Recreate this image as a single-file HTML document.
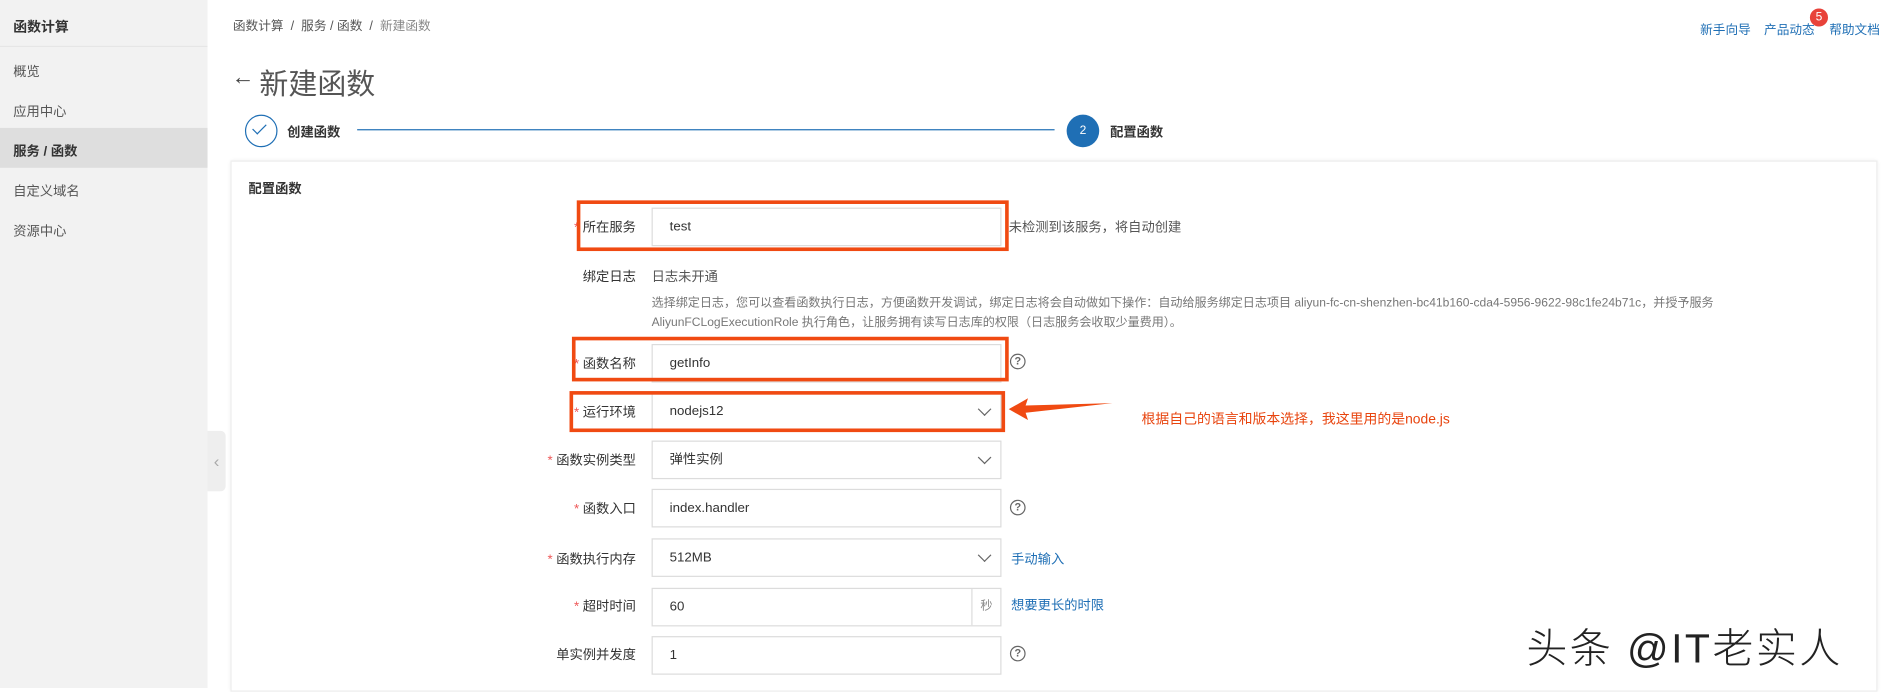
<!DOCTYPE html><html><head><meta charset="utf-8"><style>
*{margin:0;padding:0;box-sizing:border-box}
body{width:1892px;height:688px;overflow:hidden;background:#fff;font-family:"Liberation Sans","Noto Sans CJK SC",sans-serif}
#w{width:1568px;height:570px;transform:scale(1.2066,1.207);transform-origin:0 0;position:relative;color:#333;font-size:11px}
.a{position:absolute;white-space:nowrap}
.side{left:0;top:0;width:172px;height:570px;background:#f2f2f2}
.lbl{text-align:right;width:120px;font-size:11px;color:#333}
.lbl b{color:#e55;font-weight:normal;margin-right:3px}
.in{left:540px;width:290px;height:32px;border:1px solid #dcdcdc;background:#fff;padding-left:14px;line-height:30px;font-size:11px;color:#333}
.chev{position:absolute;right:9px;top:9px;width:8px;height:8px;border-right:1px solid #666;border-bottom:1px solid #666;transform:rotate(45deg)}
.q{width:13px;height:13px;border:1.3px solid #666;border-radius:50%;font-size:9px;line-height:11px;text-align:center;color:#666;font-weight:bold}
.red{border:3px solid #f04a12}
.blue{color:#1f6fb5}
</style></head><body><div id="w">
<div class="a side"></div>
<div class="a" style="left:0;top:38px;width:172px;border-top:1px solid #e6e6e6"></div>
<div class="a" style="left:11px;top:14px;font-weight:bold;font-size:11.5px">函数计算</div>
<div class="a" style="left:11px;top:51px;color:#555">概览</div>
<div class="a" style="left:11px;top:84px;color:#555">应用中心</div>
<div class="a" style="left:0;top:106px;width:172px;height:33px;background:#dedede"></div>
<div class="a" style="left:11px;top:117px;font-weight:bold">服务 / 函数</div>
<div class="a" style="left:11px;top:150px;color:#555">自定义域名</div>
<div class="a" style="left:11px;top:183px;color:#555">资源中心</div>
<div class="a" style="left:172px;top:357px;width:15px;height:50px;background:#eee;border-radius:0 4px 4px 0;color:#aaa;font-size:14px;line-height:50px;text-align:center">‹</div>

<div class="a" style="left:193px;top:14px;color:#555;font-size:10.5px">函数计算 &nbsp;/&nbsp; 服务 / 函数 &nbsp;/&nbsp; <span style="color:#888">新建函数</span></div>
<div class="a blue" style="left:1409px;top:17px;font-size:10.5px">新手向导</div>
<div class="a blue" style="left:1462px;top:17px;font-size:10.5px">产品动态</div>
<div class="a blue" style="left:1516px;top:17px;font-size:10.5px">帮助文档</div>
<div class="a" style="left:1500px;top:7px;width:15px;height:15px;border-radius:50%;background:#e8423a;color:#fff;font-size:10px;text-align:center;line-height:15px">5</div>

<div class="a" style="left:192px;top:54px;font-size:19px;color:#444">←</div>
<div class="a" style="left:215px;top:50px;font-size:24px;color:#555">新建函数</div>
<div class="a" style="left:203px;top:95px;width:27px;height:27px;border:1.3px solid #1f6fb5;border-radius:50%"></div>
<div class="a" style="left:212px;top:100px;width:6px;height:11px;border-right:1.5px solid #1f6fb5;border-bottom:1.5px solid #1f6fb5;transform:rotate(45deg)"></div>
<div class="a" style="left:238px;top:101px;font-weight:bold">创建函数</div>
<div class="a" style="left:296px;top:107px;width:578px;border-top:1px solid #1f6fb5"></div>
<div class="a" style="left:884px;top:95px;width:27px;height:27px;background:#1f6fb5;border-radius:50%;color:#fff;text-align:center;line-height:27px;font-size:10px">2</div>
<div class="a" style="left:920px;top:101px;font-weight:bold">配置函数</div>

<div class="a" style="left:191px;top:133px;width:1365px;height:440px;border:1px solid #eee;box-shadow:0 0 3px #eee"></div>
<div class="a" style="left:206px;top:148px;font-weight:bold">配置函数</div>

<div class="a lbl" style="left:407px;top:180px"><b>*</b>所在服务</div>
<div class="a in" style="top:172px">test</div>
<div class="a" style="left:836px;top:180px;color:#555">未检测到该服务，将自动创建</div>
<div class="a red" style="left:478px;top:166px;width:358px;height:42px"></div>

<div class="a lbl" style="left:407px;top:221px">绑定日志</div>
<div class="a" style="left:540px;top:221px;color:#555">日志未开通</div>
<div class="a" style="left:540px;top:244px;color:#777;font-size:10px;line-height:16px">选择绑定日志，您可以查看函数执行日志，方便函数开发调试，绑定日志将会自动做如下操作：自动给服务绑定日志项目 aliyun-fc-cn-shenzhen-bc41b160-cda4-5956-9622-98c1fe24b71c，并授予服务<br>AliyunFCLogExecutionRole 执行角色，让服务拥有读写日志库的权限（日志服务会收取少量费用）。</div>

<div class="a lbl" style="left:407px;top:293px"><b>*</b>函数名称</div>
<div class="a in" style="top:285px">getInfo</div>
<div class="a q" style="left:837px;top:293px">?</div>
<div class="a red" style="left:474px;top:279px;width:362px;height:37px"></div>

<div class="a lbl" style="left:407px;top:333px"><b>*</b>运行环境</div>
<div class="a in" style="top:325px">nodejs12<span class="chev"></span></div>
<div class="a red" style="left:472px;top:324px;width:361px;height:34px"></div>
<svg class="a" style="left:834px;top:328px" width="90" height="20"><polygon points="2,11 18,2 16,8 88,6 16,14 18,20" fill="#f04a12"/></svg>
<div class="a" style="left:946px;top:339px;color:#e8440e;font-size:11.5px">根据自己的语言和版本选择，我这里用的是node.js</div>

<div class="a lbl" style="left:407px;top:373px"><b>*</b>函数实例类型</div>
<div class="a in" style="top:365px">弹性实例<span class="chev"></span></div>
<div class="a lbl" style="left:407px;top:413px"><b>*</b>函数入口</div>
<div class="a in" style="top:405px">index.handler</div>
<div class="a q" style="left:837px;top:414px">?</div>
<div class="a lbl" style="left:407px;top:455px"><b>*</b>函数执行内存</div>
<div class="a in" style="top:446px">512MB<span class="chev"></span></div>
<div class="a blue" style="left:838px;top:455px">手动输入</div>
<div class="a lbl" style="left:407px;top:494px"><b>*</b>超时时间</div>
<div class="a in" style="top:487px">60<span style="position:absolute;right:0;top:0;width:24px;height:30px;border-left:1px solid #dcdcdc;color:#888;text-align:center;font-size:10px">秒</span></div>
<div class="a blue" style="left:838px;top:493px">想要更长的时限</div>
<div class="a lbl" style="left:407px;top:534px">单实例并发度</div>
<div class="a in" style="top:527px">1</div>
<div class="a q" style="left:837px;top:535px">?</div>

<div class="a" style="left:1265px;top:510px;font-size:34px;color:#222;font-weight:300;letter-spacing:2px">头条 @IT老实人</div>
</div></body></html>
